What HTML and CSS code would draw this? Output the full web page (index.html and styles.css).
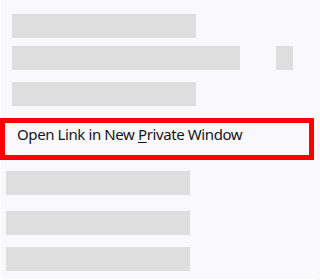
FILE: index.html
```html
<!DOCTYPE html>
<html>
<head>
<meta charset="utf-8">
<link rel="stylesheet" href="styles.css">
</head>
<body>
<div class="menu">
  <div class="bar bar-top first"></div>
  <div class="row">
    <div class="bar bar-wide"></div>
    <div class="bar bar-sq"></div>
  </div>
  <div class="bar bar-top gap12"></div>
  <div class="item"><span class="label">Open Link in New <u class="key">P</u>rivate Window</span></div>
  <div class="bar bar-low gap11"></div>
  <div class="bar bar-low gap16"></div>
  <div class="bar bar-low gap12"></div>
</div>
</body>
</html>
```
FILE: styles.css
```css
html, body {
  margin: 0;
  padding: 0;
}
body {
  width: 314px;
  height: 280px;
  background: #f9f9fb;
  overflow: hidden;
}
.menu {
  display: flex;
  flex-direction: column;
  align-items: flex-start;
  width: 314px;
  height: 280px;
  box-sizing: border-box;
  padding-top: 14px;
  background: #f9f9fb;
  box-shadow: inset 1px 0 #ffffff, inset 0 -1px #ffffff;
}
.bar {
  height: 24px;
  background: #dedede;
  flex: none;
}
.bar-top {
  width: 184px;
  margin-left: 12px;
}
.row {
  display: flex;
  margin-top: 8px;
  margin-left: 12px;
}
.bar-wide {
  width: 228px;
}
.bar-sq {
  width: 17px;
  margin-left: 36px;
}
.gap12 { margin-top: 12px; }
.gap11 { margin-top: 11px; }
.gap16 { margin-top: 16px; }
.bar-low {
  width: 184px;
  margin-left: 6px;
}
.item {
  align-self: stretch;
  height: 42px;
  box-sizing: border-box;
  border: 5px solid #ff0000;
  margin-top: 12px;
  padding: 1px 0 0 12px;
  display: flex;
  align-items: flex-start;
  font-family: "Noto Sans", "Open Sans", sans-serif;
  font-size: 15px;
  line-height: 20px;
  letter-spacing: -0.4px;
  color: #15141a;
}
.label {
  white-space: nowrap;
}
.key {
  text-decoration: underline;
  text-underline-offset: 2px;
}
```
